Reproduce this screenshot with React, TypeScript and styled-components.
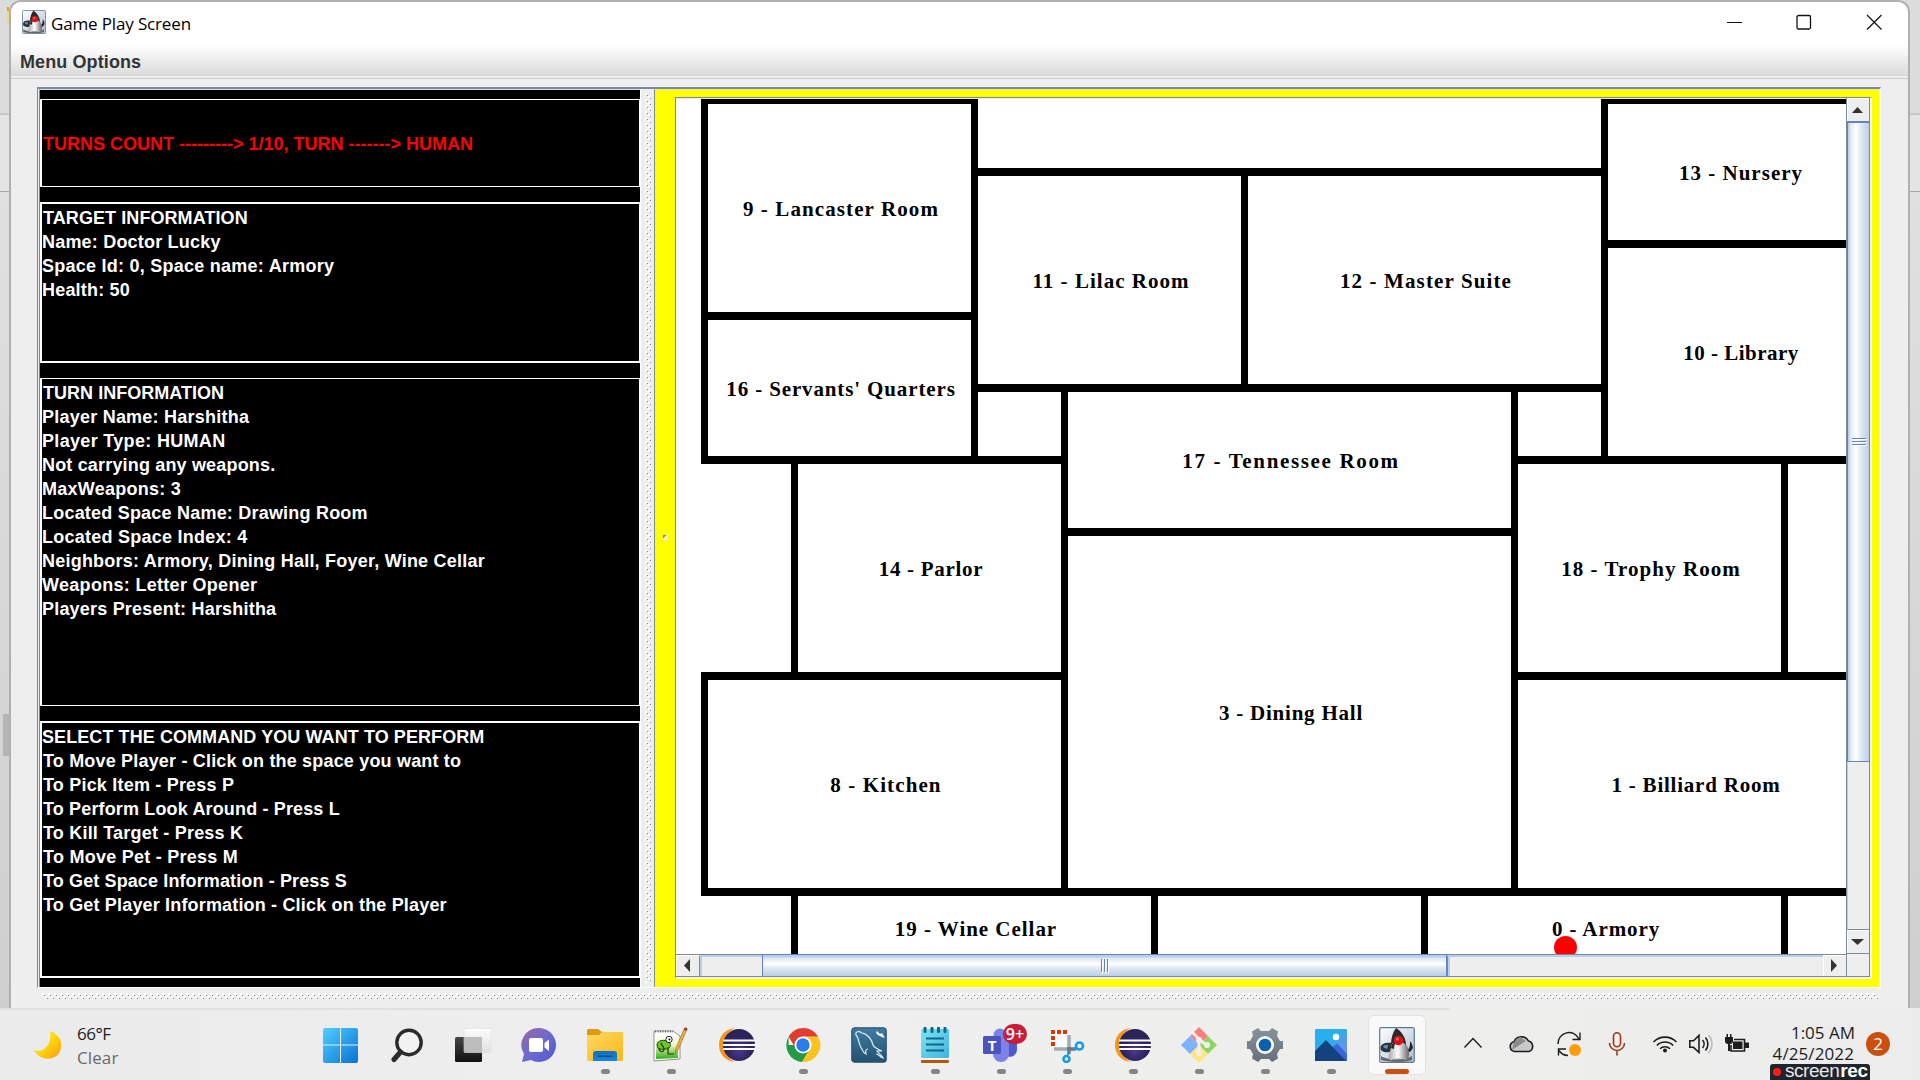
import React from 'react';
import styled, { createGlobalStyle } from 'styled-components';

const GlobalStyle = createGlobalStyle`
  * { box-sizing: border-box; }
  html, body { margin: 0; padding: 0; overflow: hidden; }
  svg { display: block; flex: none; }
`;

const sans = `"Liberation Sans", Arial, sans-serif`;
const ui = `"Open Sans", "Noto Sans", sans-serif`;
const metal = '#7a8a99';

const Screen = styled.div`
  width: 1920px;
  height: 1080px;
  display: flex;
  flex-direction: column;
  background: #ededed;
  overflow: hidden;
`;

const Desktop = styled.div`
  height: 1008px;
  display: flex;
  background: linear-gradient(#dcdcdc 0 113px, #c9c9c9 113px 115px, #e4e4e4 115px 191px, #a9a9a9 191px 192px, #e0e0e0 192px, #cfcfcf);
`;

const Strip = styled.div<{ $w: number }>`
  width: ${p => p.$w}px;
  flex: none;
  display: flex;
  flex-direction: column;
  align-items: flex-end;
`;

const FolderPeek = styled.div`
  width: 2px;
  height: 16px;
  margin-top: 7px;
  background: linear-gradient(#e5a50a 0 4px, #f7d675 4px);
`;

const ThumbPeek = styled.div`
  width: 6px;
  height: 42px;
  margin-top: 691px;
  background: #b5b5b5;
`;

const Window = styled.section`
  width: 1901px;
  flex: none;
  border: 2px solid #b0b0b0;
  border-bottom: 0;
  border-radius: 12px 12px 0 0;
  background: #eeeeee;
  display: flex;
  flex-direction: column;
  overflow: hidden;
`;

const TitleBar = styled.header`
  height: 43px;
  flex: none;
  background: #fff;
  display: flex;
  align-items: flex-start;
  padding: 8px 26px 0 11px;
`;

const Title = styled.div`
  flex: 1;
  margin-left: 5px;
  font: 17px/24px ${ui};
  letter-spacing: -0.15px;
  color: #000;
  padding-top: 2px;
`;

const Controls = styled.div`
  display: flex;
  gap: 54px;
  padding-top: 4px;
`;

const MenuBar = styled.nav`
  height: 31px;
  flex: none;
  background: linear-gradient(#ffffff, #dadada);
  font: bold 18px/31px ${sans};
  letter-spacing: 0.1px;
  color: #333;
  padding: 2px 0 0 9px;
`;

const MenuRule = styled.div`
  height: 3px;
  flex: none;
  border-bottom: 1px solid #cccccc;
`;

const Body = styled.main`
  flex: 1;
  padding: 8px 0 0 26px;
`;

const Split = styled.div`
  width: 1844px;
  height: 901px;
  display: flex;
  border-top: 2px solid ${metal};
  border-left: 1px solid ${metal};
  border-bottom: 1px solid #fff;
  border-right: 1px solid #fff;
`;

const Info = styled.aside`
  width: 602px;
  flex: none;
  margin-left: 1px;
  border-left: 1px solid ${metal};
  border-top: 1px solid #d8e0e8;
  border-right: 1px solid #fff;
  background: #000;
  display: flex;
  flex-direction: column;
  padding-top: 9px;
`;

const Panel = styled.div<{ $h: number; $gap: number; $t: number; $b: number; $red?: boolean }>`
  height: ${p => p.$h}px;
  flex: none;
  margin-bottom: ${p => p.$gap}px;
  border: solid #fff;
  border-width: ${p => p.$t}px 1px ${p => p.$b}px 2px;
  color: ${p => (p.$red ? '#ff0000' : '#ffffff')};
  font: bold 18px/24px ${sans};
  white-space: nowrap;
  display: flex;
  flex-direction: column;
  justify-content: ${p => (p.$red ? 'center' : 'flex-start')};
  padding: ${p => (p.$red ? '2px 0 0 1px' : '2px 0 0 0')};
`;

const Line = styled.div<{ $ls?: number; $in?: number }>`
  letter-spacing: ${p => p.$ls ?? 0.2}px;
  text-indent: ${p => p.$in ?? 0}px;
`;

const DividerBar = styled.div`
  width: 13px;
  flex: none;
  padding: 4px 0 0 4px;
`;

const MapPane = styled.div`
  width: 1225px;
  flex: none;
  border-left: 1px solid ${metal};
  border-top: 1px solid #e9e9a0;
  background: #ffff00;
  padding: 7px 7px 8px 20px;
`;

const ScrollPane = styled.div`
  width: 1197px;
  height: 882px;
  border-left: 1px solid ${metal};
  border-top: 1px solid ${metal};
  border-right: 2px solid #f4f4f8;
  border-bottom: 2px solid #f4f4f8;
  background: #eee;
  display: grid;
  grid-template-columns: 1170px 24px;
  grid-template-rows: 856px 23px;
`;

const Viewport = styled.div`
  overflow: hidden;
  background: #fff;
  border-top: 1px solid #e8eef4;
`;

const Board = styled.div`
  position: relative;
  display: grid;
  grid-template-columns: repeat(13, 90px);
  grid-template-rows: repeat(12, 72px);
  margin: -3px 0 0 25px;
`;

const RoomBox = styled.div<{ $c: number; $r: number; $w: number; $h: number }>`
  grid-column: ${p => p.$c + 1} / span ${p => p.$w};
  grid-row: ${p => p.$r + 1} / span ${p => p.$h};
  margin: 0 -7px -8px 0;
  border: solid #000;
  border-width: 8px 7px;
  display: flex;
  align-items: center;
  justify-content: center;
`;

const RoomName = styled.span<{ $ls: number }>`
  font: bold 21px/24px "Liberation Serif", "Times New Roman", serif;
  letter-spacing: ${p => p.$ls}px;
  white-space: nowrap;
  margin: 2px 0 0 3px;
  color: #000;
`;

const Target = styled.div`
  position: absolute;
  left: 853px;
  top: 840px;
  width: 23px;
  height: 23px;
  border-radius: 50%;
  background: #ff0000;
`;

const VBar = styled.div`
  border-left: 1px solid ${metal};
  border-right: 1px solid ${metal};
  border-bottom: 1px solid ${metal};
  display: flex;
  flex-direction: column;
`;

const HBar = styled.div`
  border-top: 1px solid ${metal};
  border-bottom: 1px solid ${metal};
  display: flex;
`;

const ArrowBtn = styled.div<{ $w?: number; $h?: number }>`
  width: ${p => (p.$w ? p.$w + 'px' : 'auto')};
  height: ${p => (p.$h ? p.$h + 'px' : 'auto')};
  flex: none;
  background: #eee;
  border-left: 1px solid #fff;
  border-top: 1px solid #fff;
  display: flex;
  align-items: center;
  justify-content: center;
  padding: 0 2px 1px 0;
`;

const VThumb = styled.div`
  height: 641px;
  flex: none;
  border: 2px solid #6382bf;
  border-width: 2px 0 1px 1px;
  background: linear-gradient(90deg, #b8cfe5 0 1px, #dbe6f1 2px, #fff 8px, #dfe9f3 13px, #b8cfe5 21px);
  display: flex;
  align-items: center;
  justify-content: center;
  padding-left: 2px;
`;

const VTrack = styled.div`
  flex: 1;
  border-left: 1px solid #b8cfe5;
  border-bottom: 1px solid ${metal};
`;

const HTrack = styled.div<{ $w: number }>`
  width: ${p => p.$w}px;
  border-left: 1px solid ${metal};
  border-top: 2px solid #b8cfe5;
  box-shadow: inset 2px 0 #b8cfe5;
`;

const HThumb = styled.div`
  width: 685px;
  flex: none;
  margin-top: -1px;
  border: 1px solid #6382bf;
  border-bottom: 0;
  background: linear-gradient(#b8cfe5 0 2px, #dbe6f1 3px, #fff 9px, #dfe9f3 13px, #b8cfe5 21px);
  display: flex;
  align-items: center;
  justify-content: center;
  padding: 2px 0 0 2px;
`;

const Corner = styled.div`
  border-right: 1px solid ${metal};
  border-bottom: 1px solid ${metal};
  border-left: 1px solid ${metal};
`;

const BottomGrip = styled.div`
  padding: 5px 0 0 5px;
`;

const Collapse = styled.div`
  position: absolute;
  left: 663px;
  top: 535px;
  width: 4px;
  height: 5px;
  background: linear-gradient(135deg, ${metal} 40%, #eee 40%);
`;

const Taskbar = styled.footer`
  height: 72px;
  display: flex;
  background: linear-gradient(90deg, #dfdfdf 0 1449px, transparent 1449px) top / 100% 2px no-repeat,
    linear-gradient(90deg, #ebebeb, #efefef 40%, #eeeeec 75%, #ececec);
  padding-top: 2px;
  color: #222;
`;

const Weather = styled.div`
  width: 308px;
  flex: none;
  display: flex;
  padding: 18px 0 0 32px;
  gap: 15px;
`;

const WeatherText = styled.div`
  font: 17px/24px ${ui};
  letter-spacing: -0.5px;
  margin-top: -6px;
  span { display: block; }
  span + span { color: #6a6a6a; letter-spacing: 0.1px; }
`;

const Apps = styled.div`
  width: 1122px;
  flex: none;
  display: flex;
`;

const AppSlot = styled.div<{ $active?: boolean }>`
  width: 66px;
  height: 70px;
  flex: none;
  display: flex;
  flex-direction: column;
  align-items: center;
`;

const ActiveSlot = styled(AppSlot)`
  width: 58px;
  height: 60px;
  margin: 5px 0 0 4px;
  border: 1px solid #e2e2e2;
  border-radius: 6px;
  background: #f9f9f9;
`;

const Pill = styled.div<{ $w: number; $color: string }>`
  width: ${p => p.$w}px;
  height: 5px;
  flex: none;
  margin-top: 2px;
  border-radius: 3px;
  background: ${p => p.$color};
`;

const Tray = styled.div`
  flex: 1;
  display: flex;
  align-items: flex-start;
`;

const Clock = styled.div`
  width: 100px;
  display: flex;
  flex-direction: column;
  align-items: flex-end;
  color: #1d1d1d;
  padding-top: 11px;
`;

const Time = styled.div`
  font: 17px/23px ${ui};
  margin-right: 15px;
`;

const DateText = styled.div`
  font: 17px/20px ${ui};
  letter-spacing: 0.1px;
  margin-right: 16px;
`;

const Recorder = styled.div`
  width: 100px;
  height: 16px;
  flex: none;
  border-radius: 3px 3px 0 0;
  background: #20242b;
  color: #e8e8e8;
  display: flex;
  align-items: center;
  gap: 4px;
  padding-left: 3px;
  font: 19px/14px "Liberation Sans", sans-serif;
  letter-spacing: -0.45px;
  b { color: #fff; margin-left: 1px; }
  i { width: 8px; height: 8px; border-radius: 50%; background: #ff1a1a; flex: none; }
`;

const Word = styled.div`
  margin-top: -2px;
  white-space: nowrap;
`;

const Badge = styled.div`
  width: 24px;
  height: 24px;
  border-radius: 50%;
  margin: 22px 0 0 -4px;
  background: #ca5010;
  color: #fff;
  font: 17px/23px ${ui};
  text-align: center;
`;

const rooms: [string, number, number, number, number, number][] = [
  ['9 - Lancaster Room', 0, 0, 3, 3, 1.1],
  ["16 - Servants' Quarters", 0, 3, 3, 2, 0.87],
  ['11 - Lilac Room', 3, 1, 3, 3, 1.03],
  ['12 - Master Suite', 6, 1, 4, 3, 1.12],
  ['13 - Nursery', 10, 0, 3, 2, 1.02],
  ['10 - Library', 10, 2, 3, 3, 0.5],
  ['', 3, 4, 1, 1, 0],
  ['', 9, 4, 1, 1, 0],
  ['17 - Tennessee Room', 4, 4, 5, 2, 1.65],
  ['14 - Parlor', 1, 5, 3, 3, 0.7],
  ['18 - Trophy Room', 9, 5, 3, 3, 1.05],
  ['8 - Kitchen', 0, 8, 4, 3, 1.1],
  ['3 - Dining Hall', 4, 6, 5, 5, 0.77],
  ['1 - Billiard Room', 9, 8, 4, 3, 0.78],
  ['19 - Wine Cellar', 1, 11, 4, 1, 0.97],
  ['0 - Armory', 8, 11, 4, 1, 0.9],
];

const Dots = ({ id, w, h }: { id: string; w: number; h: number }) => (
  <svg width={w} height={h} shapeRendering="crispEdges">
    <pattern id={id} width="6" height="6" patternUnits="userSpaceOnUse">
      <rect x="0" y="0" width="2" height="2" fill="#fff" />
      <rect x="2" y="2" width="1" height="1" fill={metal} />
      <rect x="3" y="3" width="2" height="2" fill="#fff" />
      <rect x="5" y="5" width="1" height="1" fill={metal} />
    </pattern>
    <rect width={w} height={h} fill={`url(#${id})`} />
  </svg>
);

const Duke = ({ s, id }: { s: number; id: string }) => (
  <svg width={s} height={s} viewBox="0 0 36 36">
    <defs>
      <linearGradient id={id} x1="0" y1="0" x2="1" y2="1">
        <stop offset="0" stopColor="#fff" /><stop offset="1" stopColor="#aebdd2" />
      </linearGradient>
      <linearGradient id={id + 'b'} x1="0" y1="0" x2="1" y2="0">
        <stop offset="0" stopColor="#a9a9a9" /><stop offset=".45" stopColor="#fff" /><stop offset="1" stopColor="#666" />
      </linearGradient>
    </defs>
    <rect x=".7" y=".7" width="34.6" height="34.6" rx="1.5" fill={`url(#${id})`} stroke="#5d7896" strokeWidth="1.2" />
    <path d="M1.500 21c0-5 6-6 12-5l-2 9c-5 1-10 0-10-4z" fill="#333" />
    <path d="M4 20c1-2 3-2 5-2l-1 4z" fill="#5a9be0" />
    <path d="M2 29c5 4 24 5 31 0v4c-8 3-24 2-31 0z" fill="#666" />
    <path d="M26 20l4 2 1-4 0-4 2 3 1 4-3 4-5-1z" fill="#222" />
    <path d="M18 12c6 0 9 4 11 9 2 6 1 11-2 12-3 0-4-2-8-2s-6 3-8 2c-3-2 0-8 1-12 1-5 2-8 6-9z" fill={`url(#${id}b)`} />
    <path d="M17 1c5 3 10 9 10 17-3-4-10-5-15-1 0-6 2-12 5-16z" fill="#2a2a2c" />
    <path d="M12 21c1-5 3-7 6-8-2 3-3 5-3 9z" fill="#2a2a2c" />
    <circle cx="19.5" cy="13.5" r="4.8" fill="#d8141a" />
    <circle cx="18.3" cy="12" r="1.5" fill="#ff6a6a" />
  </svg>
);

const Eclipse = ({ id }: { id: string }) => (
  <svg width="36" height="36" viewBox="0 0 36 36">
    <defs>
      <radialGradient id={id} cx=".5" cy=".65" r=".6"><stop offset="0" stopColor="#4b3a94" /><stop offset=".6" stopColor="#2f2560" /><stop offset="1" stopColor="#2c2255" /></radialGradient>
    </defs>
    <path d="M16 1C6 2 0 9 0 18s6 16 16 17C9 31 5 26 5 18S9 5 16 1z" fill="#f7941e" />
    <circle cx="20" cy="18" r="16" fill={`url(#${id})`} />
    <path d="M4 13.500h32M4 18h32M4 22h32" stroke="#fff" strokeWidth="2" />
  </svg>
);

const icons: { node: React.ReactNode; run?: boolean; active?: boolean }[] = [
  { node: (
    <svg width="36" height="36">
      <defs><linearGradient id="win" x1="0" y1="0" x2="1" y2="1"><stop offset="0" stopColor="#4fd0ff" /><stop offset="1" stopColor="#0a72d3" /></linearGradient></defs>
      <path d="M2 1H17V17.500H0V3Q0 1 2 1ZM18 1H33Q35 1 35 3V17.500H18ZM0 18.500H17V36H2Q0 36 0 34ZM18 18.500H35V34Q35 36 33 36H18Z" fill="url(#win)" />
    </svg>) },
  { node: (
    <svg width="36" height="36" fill="none" stroke="#2b2b2b">
      <circle cx="20" cy="15.500" r="12.200" strokeWidth="3.400" fill="#f2f2f2" />
      <path d="M11.500 25L5 32.500" strokeWidth="5" strokeLinecap="round" />
    </svg>) },
  { node: (
    <svg width="36" height="36">
      <defs>
        <linearGradient id="tv" x1="0" y1="0" x2="0" y2="1"><stop offset="0" stopColor="#454545" /><stop offset="1" stopColor="#111" /></linearGradient>
        <linearGradient id="tv2" x1="0" y1="0" x2="0" y2="1"><stop offset="0" stopColor="#fff" stopOpacity=".95" /><stop offset="1" stopColor="#ddd" stopOpacity=".75" /></linearGradient>
      </defs>
      <rect x="0" y="10" width="27" height="25" rx="1.500" fill="url(#tv)" />
      <rect x="9" y="1.500" width="27" height="24" rx="1.500" fill="url(#tv2)" stroke="#ddd" strokeWidth=".6" />
      <rect x="9" y="10" width="18" height="15.500" fill="#bcbcbc" />
    </svg>) },
  { node: (
    <svg width="36" height="36">
      <defs><linearGradient id="chat" x1="0" y1="0" x2="1" y2="1"><stop offset="0" stopColor="#a066a5" /><stop offset=".5" stopColor="#6a6bd0" /><stop offset="1" stopColor="#5558cc" /></linearGradient></defs>
      <path d="M18 1a17 17 0 1 1-8 32L1 35l2-8A17 17 0 0 1 18 1z" fill="url(#chat)" />
      <rect x="8" y="11" width="14" height="14" rx="2" fill="#fff" />
      <path d="M23.500 16L28 12.500V24L23.500 20.500Z" fill="#fff" />
    </svg>) },
  { run: true, node: (
    <svg width="36" height="36">
      <defs><linearGradient id="fold" x1="0" y1="0" x2="1" y2="1"><stop offset="0" stopColor="#ffd764" /><stop offset="1" stopColor="#f9b916" /></linearGradient>
      <linearGradient id="fold2" x1="0" y1="0" x2="0" y2="1"><stop offset="0" stopColor="#0f6fc0" /><stop offset="1" stopColor="#1587dd" /></linearGradient></defs>
      <path d="M0 3.500Q0 2 1.500 2H11L15 5H34.500Q36 5 36 6.500V14H0Z" fill="#dd9a0a" />
      <path d="M0 8H12L15 5H34.500Q36 5 36 6.500V32.500Q36 34 34.500 34H1.500Q0 34 0 32.500Z" fill="url(#fold)" />
      <path d="M6 34V27Q6 24 9 24H27Q30 24 30 27V34Z" fill="url(#fold2)" />
      <rect x="10.500" y="28.500" width="15" height="1.500" fill="#0b4f92" />
    </svg>) },
  { run: true, node: (
    <svg width="36" height="36">
      <defs><linearGradient id="npp" x1="0" y1="0" x2="0" y2="1"><stop offset="0" stopColor="#fdfdfd" /><stop offset=".4" stopColor="#eef6c0" /><stop offset="1" stopColor="#2fae12" /></linearGradient></defs>
      <path d="M1 4H20L27 9V32L1 34Z" fill="#fff" stroke="#777" strokeWidth=".8" />
      <path d="M3 9H25V31L3 32Z" fill="url(#npp)" />
      <path d="M2 4.500H20" stroke="#666" strokeWidth="2" strokeDasharray="1 1.500" />
      <path d="M4 18c0-5 8-6 12-3 3 3 1 7-3 7s-6 1-8-1z" fill="#6cc72a" stroke="#26440f" />
      <circle cx="16" cy="12.500" r="3.200" fill="#fff" stroke="#222" />
      <circle cx="16.500" cy="12.500" r="1" fill="#111" />
      <path d="M6 21c0 4 5 5 5 1s-5-4-2-6M15 20v7h6" stroke="#20350f" fill="none" strokeWidth="1.200" />
      <path d="M34 2L25 23L22 27L23 21L31.500 1Z" fill="#f0b430" stroke="#8a6414" strokeWidth=".6" />
      <path d="M31.500 1L33 0.500L34.500 1.500L33.500 4L31 3Z" fill="#a33" />
    </svg>) },
  { node: <Eclipse id="ecl1" /> },
  { run: true, node: (
    <svg width="36" height="36">
      <path d="M18 18H3.600L3.600 9.500A17 17 0 0 0 17 35L25 22Z" fill="#249a48" />
      <path d="M18 18V9.500H33A17 17 0 0 1 17 35L25.300 22Z" fill="#fcc31e" />
      <path d="M18 9.500H33A17 17 0 0 0 3.600 9.500L11 22Z" fill="#e33b2e" />
      <circle cx="18" cy="18" r="8.500" fill="#fff" /><circle cx="18" cy="18" r="6.700" fill="#2a7de9" />
    </svg>) },
  { node: (
    <svg width="36" height="36">
      <defs><linearGradient id="sql" x1="0" y1="0" x2="0" y2="1"><stop offset="0" stopColor="#3f7da3" /><stop offset="1" stopColor="#22516f" /></linearGradient></defs>
      <rect x=".8" y=".8" width="34.400" height="34.400" rx="3" fill="url(#sql)" stroke="#2b5671" strokeWidth="1.200" />
      <path d="M5 8C4 4 8 4 11 6C17 7 21 13 22 18C23 21 27 22 31 24L26 24C28 27 31 28 32 31C29 30 28 27 25 27M5 8C7 10 7 12 8 15C9 18 9 20 11 22C12 24 12 26 15 27C14 24 15 22 17 22" fill="none" stroke="#dfeaf1" strokeWidth="1.200" />
      <path d="M26 4L29 7L31 6L32 8L34 11L31 10L27 8L25 6Z" fill="#fff" />
    </svg>) },
  { run: true, node: (
    <svg width="28" height="36">
      <defs><linearGradient id="note" x1="0" y1="0" x2="1" y2="1"><stop offset="0" stopColor="#7ee3f4" /><stop offset="1" stopColor="#43b3dc" /></linearGradient></defs>
      <rect x="0" y="33" width="28" height="3" rx="1" fill="#b65708" />
      <rect x="0" y="2" width="28" height="29" rx="1" fill="url(#note)" /><rect y="31" width="28" height="2" fill="#f4f4f4" />
      <path d="M4 1v3.500M11 1v3.500M17.500 1v3.500M24 1v3.500" stroke="#0a6a88" strokeWidth="3" strokeLinecap="round" />
      <path d="M5 11.500H23M5 17.500H23M5 23.500H23" stroke="#0c6b8b" strokeWidth="2" />
    </svg>) },
  { run: true, node: (
    <svg width="40" height="40" style={{ overflow: 'visible' }}>
      <circle cx="19" cy="11" r="6.500" fill="#7b83eb" />
      <path d="M27 17H36V26a7 7 0 0 1-9 6.500Z" fill="#5059c9" />
      <path d="M12 15H28V30a8 8 0 0 1-16 0Z" fill="#7b83eb" />
      <rect x="2" y="12" width="18" height="18" rx="1.500" fill="#4b53bc" />
      <text x="11" y="26.500" textAnchor="middle" fontFamily="Open Sans, sans-serif" fontWeight="700" fontSize="15" fill="#fff">T</text>
      <rect x="22" y="0" width="24" height="20" rx="10" fill="#c81e3a" />
      <text x="34" y="15.500" textAnchor="middle" fontFamily="Open Sans, sans-serif" fontWeight="600" fontSize="16" fill="#fff">9+</text>
    </svg>) },
  { run: true, node: (
    <svg width="36" height="36">
      <rect x="3" y="4" width="17" height="17" fill="#f8fbfd" />
      <path d="M20 8V22H5" fill="none" stroke="#a3abb1" strokeWidth="3.500" />
      <path d="M20 20V27M18 22H27" stroke="#70787f" strokeWidth="3.500" />
      <path d="M2 5H18" stroke="#d83b01" strokeWidth="4" strokeDasharray="4 2" />
      <path d="M4 9V19" stroke="#d83b01" strokeWidth="4" strokeDasharray="4 2" />
      <circle cx="30.500" cy="19" r="3.500" fill="none" stroke="#1a9be0" strokeWidth="2.600" />
      <circle cx="17.500" cy="32" r="3" fill="none" stroke="#1a9be0" strokeWidth="2.600" />
      <path d="M19 28L20 25M27 21L24 22" stroke="#1a9be0" strokeWidth="2" />
    </svg>) },
  { run: true, node: <Eclipse id="ecl2" /> },
  { run: true, node: (
    <svg width="36" height="36">
      <path d="M18 0L27 9L18 18L9 9Z" fill="#ff7d7d" /><path d="M27 9L36 18L27 27L18 18Z" fill="#8ed663" />
      <path d="M9 9L18 18L9 27L0 18Z" fill="#80b3ff" /><path d="M18 18L27 27L18 36L9 27Z" fill="#ffe680" />
      <path d="M11 5L18 12V26M18 12L25 18" stroke="#f2f0ee" strokeWidth="3" fill="none" />
      <circle cx="18" cy="13" r="3" fill="#f2f0ee" /><circle cx="18" cy="26" r="3" fill="#f2f0ee" /><circle cx="26" cy="18" r="3" fill="#f2f0ee" />
    </svg>) },
  { run: true, node: (
    <svg width="36" height="36">
      <defs><linearGradient id="gear" x1="0" y1="0" x2="0" y2="1"><stop offset="0" stopColor="#89929a" /><stop offset="1" stopColor="#66707a" /></linearGradient></defs>
      <path d="M11 1L14 4H22L25 1L31 4.500L30 9L33 14H36V22H33L30 27L31 31.500L25 35L22 32H14L11 35L5 31.500L6 27L3 22H0V14H3L6 9L5 4.500Z" fill="url(#gear)" />
      <circle cx="18" cy="18" r="9" fill="#fafafa" /><circle cx="18" cy="18" r="6.300" fill="#0b5fb0" />
    </svg>) },
  { run: true, node: (
    <svg width="32" height="36">
      <defs><linearGradient id="pic" x1="0" y1="0" x2="1" y2="1"><stop offset=".4" stopColor="#27b0ee" /><stop offset="1" stopColor="#8f7fe0" /></linearGradient></defs>
      <rect y="2" width="32" height="32" rx="1" fill="url(#pic)" />
      <path d="M14 24L22 16.500L32 27V34H16Z" fill="#3567d6" />
      <path d="M0 24L11 13L31 34H0Z" fill="#14427f" />
      <circle cx="21" cy="10" r="3.200" fill="#fff" />
    </svg>) },
  { active: true, run: true, node: <Duke s={36} id="duke2" /> },
];

const IconHold = styled.div`
  height: 40px;
  margin-top: 17px;
  flex: none;
`;

const TeamsHold = styled(IconHold)`
  margin-top: 14px;
  height: 43px;
`;

const ActiveHold = styled(IconHold)`
  margin-top: 11px;
`;

export default function App() {
  return (
    <Screen>
      <GlobalStyle />
      <Desktop>
        <Strip $w={9}><FolderPeek /><ThumbPeek /></Strip>
        <Window>
          <TitleBar>
            <Duke s={24} id="duke1" />
            <Title>Game Play Screen</Title>
            <Controls>
              <svg width="16" height="16"><path d="M1 8.500H16" stroke="#111" /></svg>
              <svg width="16" height="16"><rect x="1" y="1.500" width="13.500" height="13.500" rx="1.500" fill="none" stroke="#111" strokeWidth="1.300" /></svg>
              <svg width="16" height="16"><path d="M1 1L15.500 15.500M15.500 1L1 15.500" stroke="#111" strokeWidth="1.200" /></svg>
            </Controls>
          </TitleBar>
          <MenuBar>Menu Options</MenuBar>
          <MenuRule />
          <Body>
            <Split>
              <Info>
                <Panel $h={88} $gap={15} $t={1} $b={1} $red>
                  <Line $ls={0}>TURNS COUNT ---------&gt; 1/10, TURN -------&gt; HUMAN</Line>
                </Panel>
                <Panel $h={161} $gap={15} $t={2} $b={2}>
                  <Line $ls={0.08} $in={1}>TARGET INFORMATION</Line>
                  <Line>Name: Doctor Lucky</Line>
                  <Line $ls={0.25}>Space Id: 0, Space name: Armory</Line>
                  <Line>Health: 50</Line>
                </Panel>
                <Panel $h={328} $gap={15} $t={1} $b={1}>
                  <Line $ls={0.03} $in={1}>TURN INFORMATION</Line>
                  <Line $ls={0.23}>Player Name: Harshitha</Line>
                  <Line $ls={0.32}>Player Type: HUMAN</Line>
                  <Line $ls={0.17}>Not carrying any weapons.</Line>
                  <Line $ls={0.25}>MaxWeapons: 3</Line>
                  <Line $ls={0.21}>Located Space Name: Drawing Room</Line>
                  <Line $ls={0.25}>Located Space Index: 4</Line>
                  <Line $ls={0.22}>Neighbors: Armory, Dining Hall, Foyer, Wine Cellar</Line>
                  <Line $ls={0.3}>Weapons: Letter Opener</Line>
                  <Line>Players Present: Harshitha</Line>
                </Panel>
                <Panel $h={257} $gap={0} $t={2} $b={2}>
                  <Line $ls={0.08}>SELECT THE COMMAND YOU WANT TO PERFORM</Line>
                  <Line $ls={0.18} $in={1}>To Move Player - Click on the space you want to</Line>
                  <Line $in={1}>To Pick Item - Press P</Line>
                  <Line $ls={0.15} $in={1}>To Perform Look Around - Press L</Line>
                  <Line $in={1}>To Kill Target - Press K</Line>
                  <Line $ls={0.25} $in={1}>To Move Pet - Press M</Line>
                  <Line $ls={0.12} $in={1}>To Get Space Information - Press S</Line>
                  <Line $ls={0.17} $in={1}>To Get Player Information - Click on the Player</Line>
                </Panel>
              </Info>
              <DividerBar><Dots id="vdots" w={6} h={890} /></DividerBar>
              <MapPane>
                <ScrollPane>
                  <Viewport>
                    <Board>
                      {rooms.map(([name, c, r, w, h, ls], i) => (
                        <RoomBox key={i} $c={c} $r={r} $w={w} $h={h}>
                          <RoomName $ls={ls}>{name}</RoomName>
                        </RoomBox>
                      ))}
                      <Target />
                    </Board>
                  </Viewport>
                  <VBar>
                    <ArrowBtn $h={23}><svg width="11" height="6"><path d="M5.500 0L11 6H0Z" fill="#333" /></svg></ArrowBtn>
                    <VThumb>
                      <svg width="15" height="9" shapeRendering="crispEdges">
                        <path d="M1 1.500H15M1 4.500H15M1 7.500H15" stroke="#fff" /><path d="M0 .5H14M0 3.500H14M0 6.500H14" stroke="#6382bf" />
                      </svg>
                    </VThumb>
                    <VTrack />
                    <ArrowBtn $h={23}><svg width="13" height="6"><path d="M6.500 6L13 0H0Z" fill="#333" /></svg></ArrowBtn>
                  </VBar>
                  <HBar>
                    <ArrowBtn $w={23}><svg width="6" height="13"><path d="M0 6.500L6 0V13Z" fill="#333" /></svg></ArrowBtn>
                    <HTrack $w={63} />
                    <HThumb>
                      <svg width="9" height="15" shapeRendering="crispEdges">
                        <path d="M1.500 1V15M4.500 1V15M7.500 1V15" stroke="#fff" /><path d="M.5 0V13M3.500 0V13M6.500 0V13" stroke="#6382bf" />
                      </svg>
                    </HThumb>
                    <HTrack $w={376} />
                    <ArrowBtn $w={23}><svg width="6" height="13"><path d="M6 6.500L0 0V13Z" fill="#333" /></svg></ArrowBtn>
                  </HBar>
                  <Corner />
                </ScrollPane>
              </MapPane>
            </Split>
            <BottomGrip><Dots id="hdots" w={1836} h={6} /></BottomGrip>
          </Body>
        </Window>
        <Strip $w={10} />
      </Desktop>
      <Collapse />
      <Taskbar>
        <Weather>
          <svg width="30" height="36">
            <defs><linearGradient id="moon" x1="0" y1="0" x2="1" y2="1"><stop offset="0" stopColor="#fff06a" /><stop offset=".5" stopColor="#ffd60a" /><stop offset="1" stopColor="#f59a0c" /></linearGradient></defs>
            <path d="M18 3C27 6 32 15 28 23C24 33 8 34 2 22C12 25 20 17 18 3Z" fill="url(#moon)" />
          </svg>
          <WeatherText><span>66°F</span><span>Clear</span></WeatherText>
        </Weather>
        <Apps>
          {icons.map((ic, i) => {
            const Hold = i === 10 ? TeamsHold : ic.active ? ActiveHold : IconHold;
            const Slot = ic.active ? ActiveSlot : AppSlot;
            return (
              <Slot key={i}>
                <Hold>{ic.node}</Hold>
                {ic.run && <Pill $w={ic.active ? 24 : 9} $color={ic.active ? '#ca5010' : '#858585'} />}
              </Slot>
            );
          })}
        </Apps>
        <Tray>
          <svg width="340" height="70" viewBox="1430 1010 340 70" fill="none" stroke="#1d1d1d" strokeWidth="1.600">
            <path d="M1464.500 1047.500L1473 1038.500L1481.500 1047.500" strokeWidth="1.400" />
            <path d="M1514.500 1051.500a5 5 0 0 1-.5-9.800a8 8 0 0 1 14.500-.7a5.500 5.500 0 0 1 .5 10.500z" fill="#c9c9c9" />
            <path d="M1512 1050L1526 1041L1520 1037L1514 1042Z" fill="#8d8d8d" stroke="none" />
            <path d="M1558 1044a11 11 0 0 1 21-5M1580 1032.500V1039.500H1572.500M1558.500 1055.500V1049H1566M1559 1050.500a11 11 0 0 0 9 5" strokeWidth="1.400" />
            <circle cx="1575" cy="1050" r="6" fill="#ff9c0a" stroke="none" />
            <rect x="1613.500" y="1032.800" width="7" height="14" rx="3.500" stroke="#9c3a17" />
            <path d="M1609.500 1043a7.500 7.500 0 0 0 15 0M1617 1050.500V1055.500" stroke="#9c3a17" />
            <path d="M1653.500 1042a16 16 0 0 1 23 0M1656.800 1045.500a11.500 11.500 0 0 1 16.400 0M1660 1048.800a7 7 0 0 1 10 0" />
            <circle cx="1665" cy="1050.500" r="2" fill="#1d1d1d" stroke="none" />
            <path d="M1689.800 1040.800H1693.500L1699 1035.500V1052.500L1693.500 1047.300H1689.800Z" />
            <path d="M1702.500 1040a6 6 0 0 1 0 8M1705.500 1037.500a10 10 0 0 1 0 13" />
            <path d="M1708.500 1035a13.500 13.500 0 0 1 0 18" stroke="#bbb" />
            <path d="M1734 1039.500H1744.500V1051H1731V1045" strokeWidth="1.600" />
            <path d="M1733 1041.500H1742.500V1049H1733ZM1745 1042.500H1749V1048H1745ZM1725 1037H1733V1041Q1733 1044 1730 1044V1051H1728V1044Q1725 1044 1725 1041ZM1726.500 1034H1728V1037H1726.500ZM1730 1034H1731.500V1037H1730Z" fill="#1d1d1d" stroke="none" />
          </svg>
          <Clock>
            <Time>1:05 AM</Time>
            <DateText>4/25/2022</DateText>
            <Recorder><i /><Word>screen<b>rec</b></Word></Recorder>
          </Clock>
          <Badge>2</Badge>
        </Tray>
      </Taskbar>
    </Screen>
  );
}
